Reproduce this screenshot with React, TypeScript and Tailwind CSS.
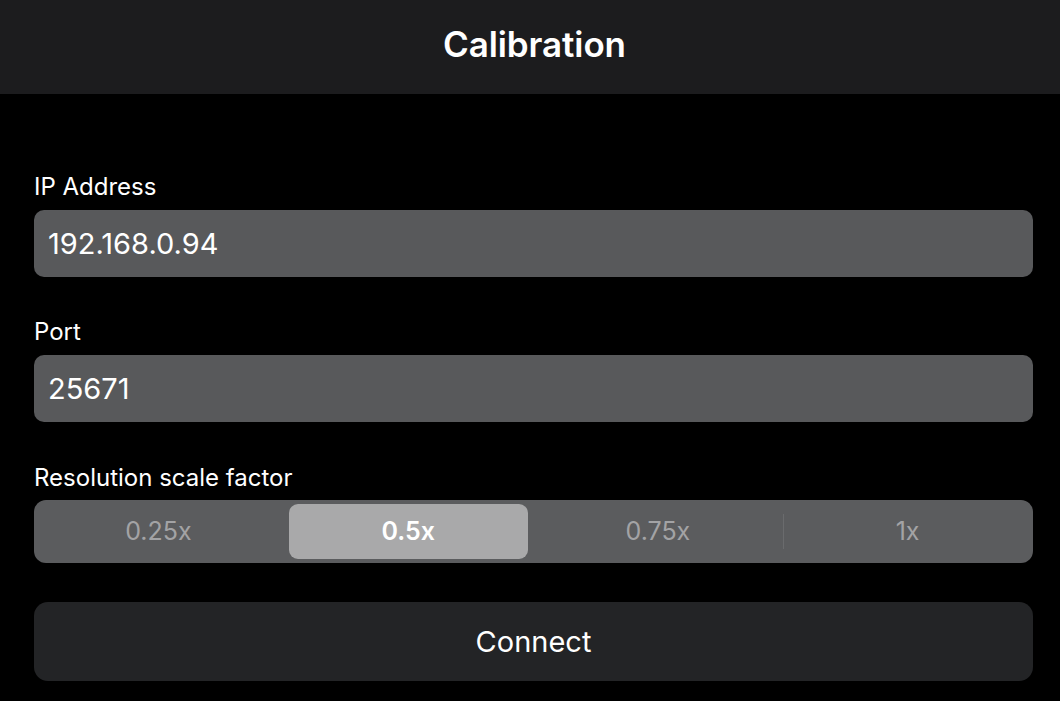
import React, { useState } from 'react';

const scales = ['0.25x', '0.5x', '0.75x', '1x'];

const Field = ({ label, value }: { label: string; value: string }) => (
    <div className="flex flex-col">
        <label className="text-[24px] leading-[28px] text-white">{label}</label>
        <div className="mt-[9px] h-[67px] rounded-[10px] bg-[#58595b] px-[14px] flex items-center">
            <span className="text-[29px] text-white">{value}</span>
        </div>
    </div>
);

const App = () => {
    const [selected, setSelected] = useState(1);

    return (
        <div className="w-[1060px] h-[701px] bg-black overflow-hidden" style={{ fontFamily: 'Inter, "Noto Sans", sans-serif' }}>
            <div className="h-[94px] bg-[#1c1c1e] flex items-center justify-center pb-[5px] pl-[9px]">
                <h1 className="text-[35px] font-semibold text-white tracking-[-0.1px]">Calibration</h1>
            </div>

            <div className="pl-[34px] pr-[27px] pt-[79px] flex flex-col">
                <Field label="IP Address" value="192.168.0.94" />
                <div className="mt-[41px]">
                    <Field label="Port" value="25671" />
                </div>

                <div className="mt-[42px] flex flex-col">
                    <label className="text-[24px] leading-[28px] text-white">Resolution scale factor</label>
                    <div className="mt-[8px] h-[63px] rounded-[12px] bg-[#5b5c5e] flex">
                        {scales.map((s, i) => (
                            <div key={s} className="flex-1 flex items-stretch relative py-[4px] pl-[5px] pr-[6px]">
                                {i > 0 && i !== selected && i - 1 !== selected && (
                                    <div className="absolute left-0 top-[14px] bottom-[14px] w-px bg-[#6a6b6d]" />
                                )}
                                <button
                                    onClick={() => setSelected(i)}
                                    className={
                                        i === selected
                                            ? 'w-full h-full rounded-[9px] bg-[#a9a9aa] text-white text-[25px] font-semibold'
                                            : 'w-full h-full text-[#a3a3a5] text-[25px]'
                                    }
                                >
                                    {s}
                                </button>
                            </div>
                        ))}
                    </div>
                </div>

                <button className="mt-[39px] h-[79px] rounded-[14px] bg-[#232426] text-white text-[29px]">
                    Connect
                </button>
            </div>
        </div>
    );
};

export default App;
